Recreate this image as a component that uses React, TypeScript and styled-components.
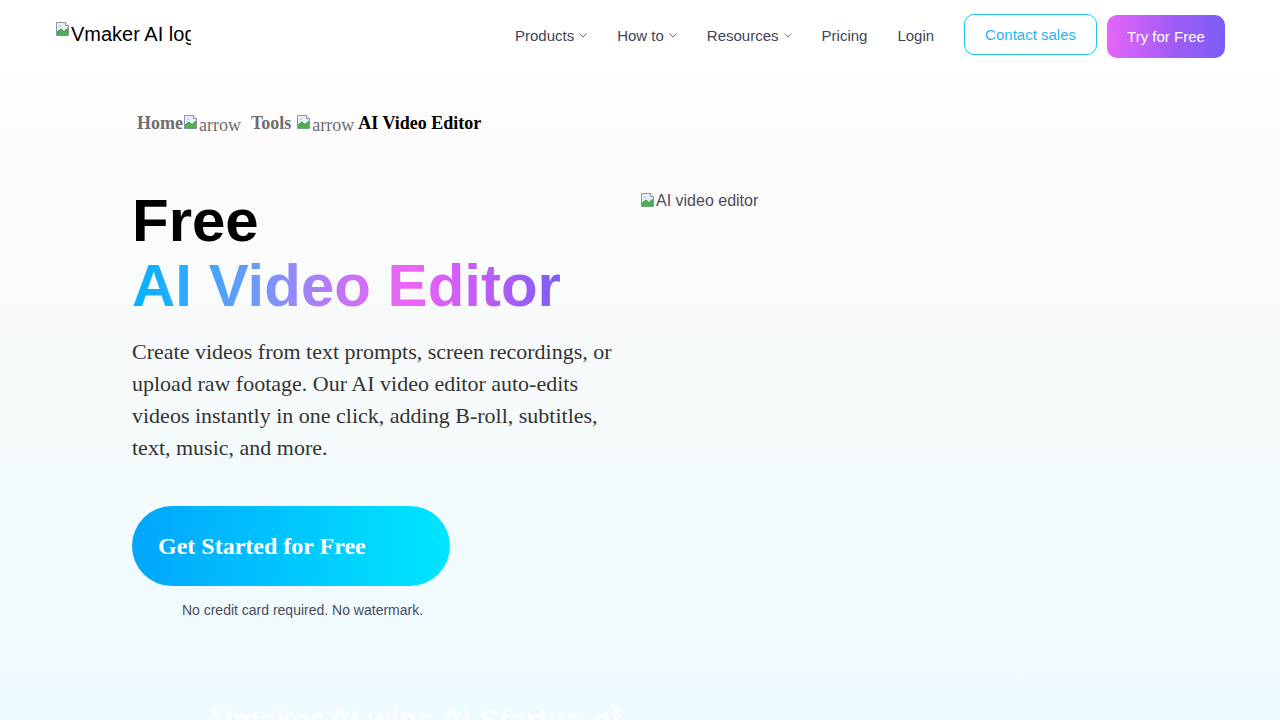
import React from "react";
import styled, { createGlobalStyle } from "styled-components";

const Global = createGlobalStyle`
  html, body { margin: 0; padding: 0; }
  body {
    font-family: "Liberation Sans", Arial, sans-serif;
    background: #ffffff;
    overflow: hidden;
  }
  * { box-sizing: border-box; }
`;

const Page = styled.div`
  width: 1280px;
  height: 720px;
  overflow: hidden;
  background: linear-gradient(180deg, #ffffff 0px, #ffffff 70px, #fdfbfa 150px, #f6fafb 400px, #edfbfe 720px);
`;

const Header = styled.header`
  height: 70px;
  display: flex;
  align-items: center;
  padding: 0 55px;
  background: #ffffff;
`;

const Logo = styled.div`
  width: 136px;
  height: 30px;
  overflow: hidden;
  display: flex;
  align-items: flex-start;
  white-space: nowrap;
  font-size: 20px;
  color: #000;
  line-height: 24px;
  margin-top: 4px;
  svg { flex: none; margin-top: -1px; }
`;

const Nav = styled.nav`
  margin-left: auto;
  display: flex;
  align-items: center;
`;

const NavItem = styled.a`
  display: flex;
  align-items: center;
  gap: 5px;
  font-size: 15px;
  color: #3e4458;
  text-decoration: none;
  margin-right: 30px;
`;

const Buttons = styled.div`
  display: flex;
  gap: 10px;
  align-items: center;
`;

const OutlineBtn = styled.a`
  height: 41px;
  padding: 0 20px;
  display: flex;
  align-items: center;
  border: 1px solid #1fc3f6;
  border-radius: 10px;
  color: #1db7ef;
  font-size: 15px;
  margin-top: -2px;
`;

const GradBtn = styled.a`
  height: 43px;
  width: 118px;
  display: flex;
  align-items: center;
  justify-content: center;
  border-radius: 10px;
  color: #fff;
  font-size: 15px;
  margin-top: 2px;
  background: linear-gradient(90deg, #e565f8 0%, #a25cf6 55%, #7b5cf6 100%);
`;

const Crumbs = styled.div`
  padding: 41px 0 0 137px;
  display: flex;
  align-items: flex-end;
  font-family: "Liberation Serif", "Times New Roman", serif;
  font-size: 18px;
  line-height: 24px;
  height: 65px;
`;

const Crumb = styled.span<{ $current?: boolean; $gap?: number }>`
  font-weight: bold;
  color: ${(p) => (p.$current ? "#000" : "#6e6e6e")};
  margin-left: ${(p) => p.$gap ?? 0}px;
`;

const Broken = styled.span<{ $gap?: number }>`
  display: inline-flex;
  align-items: flex-start;
  color: #6e6e6e;
  margin-left: ${(p) => p.$gap ?? 0}px;
  margin-right: 4px;
  line-height: 24px;
  transform: translateY(2px);
  svg { margin-top: 1px; flex: none; }
`;

const Hero = styled.section`
  display: grid;
  grid-template-columns: 488px 1fr;
  gap: 20px;
  padding: 53px 0 0 132px;
`;

const Left = styled.div`
  display: flex;
  flex-direction: column;
`;

const Title = styled.h1`
  margin: 0;
  font-family: "Liberation Sans", Arial, sans-serif;
  font-weight: bold;
  font-size: 60px;
  line-height: 65px;
  color: #000;
`;

const Gradient = styled.span`
  display: inline-block;
  background: linear-gradient(90deg, #00b4ff 0%, #6b9bfb 28%, #c673f4 50%, #ef63f6 65%, #b55cf6 85%, #7c5df6 100%);
  -webkit-background-clip: text;
  background-clip: text;
  color: transparent;
`;

const Lead = styled.p`
  margin: 18px 0 0;
  font-family: "Liberation Serif", "Times New Roman", serif;
  font-size: 22px;
  line-height: 32px;
  color: #333333;
  width: 490px;
`;

const Cta = styled.a`
  margin-top: 42px;
  width: 318px;
  height: 80px;
  border-radius: 40px;
  display: flex;
  align-items: center;
  padding-left: 26px;
  background: linear-gradient(90deg, #00a6fc 0%, #00e6ff 100%);
  color: #fff;
  font-family: "Liberation Serif", "Times New Roman", serif;
  font-weight: bold;
  font-size: 24px;
`;

const Note = styled.p`
  margin: 16px 0 0;
  width: 341px;
  text-align: center;
  font-size: 14px;
  color: #4a4c5e;
`;

const Right = styled.div`
  display: flex;
  align-items: flex-start;
  padding-top: 4px;
  font-size: 16px;
  color: #4a4c5e;
  line-height: 18px;
  svg { flex: none; }
`;

const Award = styled.h2`
  margin: 0;
  padding: 85px 0 0 213px;
  font-size: 30px;
  font-weight: bold;
  color: rgba(255, 255, 255, 0.85);
  white-space: nowrap;
`;

const BrokenIcon = () => (
  <svg width="16" height="16" viewBox="0 0 16 16">
    <path d="M1.5 1.5h9l3 3v10h-12z" fill="#e9eef4" stroke="#8a98a8" strokeWidth="1" />
    <path d="M10.5 1.5v3h3" fill="#fff" stroke="#8a98a8" strokeWidth="1" />
    <path d="M2 14.5V11l4-3 3 2.5 4-3.5v7.5z" fill="#4caf50" />
    <path d="M2 11l4-3 3 2.5 4-3.5" fill="none" stroke="#2e8b3a" strokeWidth="0.8" />
    <circle cx="5" cy="5" r="1.3" fill="#c9d8e6" />
  </svg>
);

const Chevron = () => (
  <svg width="8" height="5" viewBox="0 0 8 5">
    <path d="M0.5 0.5 4 4 7.5 0.5" fill="none" stroke="#6b7080" strokeWidth="1" />
  </svg>
);

export default function App() {
  return (
    <Page>
      <Global />
      <Header>
        <Logo>
          <BrokenIcon />
          <span>Vmaker AI logo</span>
        </Logo>
        <Nav>
          <NavItem>Products <Chevron /></NavItem>
          <NavItem>How to <Chevron /></NavItem>
          <NavItem>Resources <Chevron /></NavItem>
          <NavItem>Pricing</NavItem>
          <NavItem>Login</NavItem>
          <Buttons>
            <OutlineBtn>Contact sales</OutlineBtn>
            <GradBtn>Try for Free</GradBtn>
          </Buttons>
        </Nav>
      </Header>
      <Crumbs>
        <Crumb>Home</Crumb>
        <Broken><BrokenIcon />arrow</Broken>
        <Crumb $gap={6}>Tools</Crumb>
        <Broken $gap={5}><BrokenIcon />arrow</Broken>
        <Crumb $current>AI Video Editor</Crumb>
      </Crumbs>
      <Hero>
        <Left>
          <Title>
            Free
            <br />
            <Gradient>AI Video Editor</Gradient>
          </Title>
          <Lead>
            Create videos from text prompts, screen recordings, or upload raw footage. Our AI video editor auto-edits videos instantly in one click, adding B-roll, subtitles, text, music, and more.
          </Lead>
          <Cta>Get Started for Free</Cta>
          <Note>No credit card required. No watermark.</Note>
        </Left>
        <Right>
          <BrokenIcon />
          <span>AI video editor</span>
        </Right>
      </Hero>
      <Award>Vmaker AI wins AI Startup of</Award>
    </Page>
  );
}
